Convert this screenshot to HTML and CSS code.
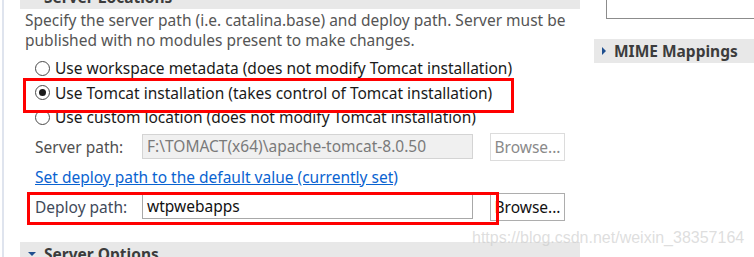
FILE: index.html
```html
<!DOCTYPE html>
<html lang="en">
<head>
<meta charset="UTF-8">
<title>Server Locations</title>
<link rel="stylesheet" href="styles.css">
</head>
<body>

<div class="page">
    <div class="left">
        <div class="section-head cut"><span class="arrow-down"></span>Server Locations</div>

        <div class="desc">Specify the server path (i.e. catalina.base) and deploy path. Server must be published with no modules present to make changes.</div>

        <div class="radios">
            <label class="radio"><span class="circle"></span>Use workspace metadata (does not modify Tomcat installation)</label>
            <label class="radio"><span class="circle checked"></span>Use Tomcat installation (takes control of Tomcat installation)</label>
            <label class="radio"><span class="circle"></span>Use custom location (does not modify Tomcat installation)</label>
        </div>

        <div class="row disabled">
            <span class="label">Server path:</span>
            <div class="field">F:\TOMACT(x64)\apache-tomcat-8.0.50</div>
            <div class="button">Browse...</div>
        </div>

        <a class="link" href="#">Set deploy path to the default value (currently set)</a>

        <div class="row deploy">
            <span class="label">Deploy path:</span>
            <div class="field">wtpwebapps</div>
            <div class="button">Browse...</div>
        </div>

        <div class="section-head bottom"><span class="arrow-down"></span>Server Options</div>
    </div>

    <div class="right">
        <div class="box"></div>
        <div class="section-head mime"><span class="arrow-right"></span>MIME Mappings</div>
    </div>
</div>

<!-- annotations drawn over the screenshot -->
<div class="mark mark1"></div>
<div class="mark mark2"></div>
<div class="watermark">https://blog.csdn.net/weixin_38357164</div>

</body>
</html>
```

FILE: styles.css
```css
body {
    margin: 0;
    font-family: "Noto Sans", "Open Sans", sans-serif;
    font-size: 15.5px;
    background-color: #fff;
    overflow: hidden;
    position: relative;
    width: 754px;
    height: 257px;
}
.page {
    display: flex;
    height: 257px;
}
.left {
    width: 560px;
    margin-left: 2px;
    border-left: 2px solid #dfe4ee;
    padding-left: 16px;
    display: flex;
    flex-direction: column;
}
.section-head {
    background-color: #e8e8e8;
    color: #3c3c3c;
    font-weight: bold;
    display: flex;
    align-items: center;
    gap: 8px;
    padding-left: 8px;
    line-height: 24px;
    height: 24px;
    flex-shrink: 0;
}
.section-head.cut {
    margin-top: -15px;
}
.arrow-down {
    width: 0;
    height: 0;
    border-left: 4px solid transparent;
    border-right: 4px solid transparent;
    border-top: 4px solid #1f4f8f;
}
.arrow-right {
    width: 0;
    height: 0;
    border-top: 4px solid transparent;
    border-bottom: 4px solid transparent;
    border-left: 4px solid #1f4f8f;
}
.desc {
    color: #555;
    line-height: 20px;
    padding-left: 5px;
    margin-top: 1px;
    width: 555px;
}
.radios {
    display: flex;
    flex-direction: column;
    margin-top: 6px;
    padding-left: 15px;
}
.radio {
    display: flex;
    align-items: center;
    height: 24.5px;
    color: #1a1a1a;
    white-space: nowrap;
}
.circle {
    width: 13px;
    height: 13px;
    border: 1px solid #4a4a4a;
    border-radius: 50%;
    margin-right: 5px;
    display: flex;
    align-items: center;
    justify-content: center;
    background-color: #fff;
    flex-shrink: 0;
}
.circle.checked::after {
    content: "";
    width: 7px;
    height: 7px;
    border-radius: 50%;
    background-color: #1a1a1a;
}
.row {
    display: flex;
    align-items: center;
    padding-left: 15px;
    height: 28px;
    margin-top: 3px;
}
.label {
    width: 107px;
    color: #505050;
}
.field {
    width: 325px;
    height: 23px;
    border: 1px solid #a8a8a8;
    padding-left: 4px;
    line-height: 23px;
    color: #111;
}
.button {
    margin-left: 17px;
    width: 73px;
    height: 26px;
    border: 1px solid #adadad;
    line-height: 26px;
    text-align: center;
    color: #111;
}
.disabled .field {
    background-color: #f0f0f0;
    border-color: #d4d4d4;
    color: #7a7a7a;
}
.disabled .button {
    border-color: #dcdcdc;
    color: #8a8a8a;
}
.link {
    color: #0a63d1;
    text-decoration: underline;
    padding-left: 15px;
    margin-top: 3px;
    line-height: 26px;
    align-self: flex-start;
}
.row.deploy {
    margin-top: 3px;
}
.deploy .label {
    color: #3f4a5a;
}
.section-head.bottom {
    margin-top: 21px;
}
.right {
    flex: 1;
    display: flex;
    flex-direction: column;
    padding-left: 14px;
}
.box {
    margin-left: 12px;
    height: 18px;
    border-left: 1px solid #8c8c8c;
    border-bottom: 1px solid #8c8c8c;
}
.section-head.mime {
    margin-top: 20px;
}
.mark {
    position: absolute;
    border: 3px solid #f00;
}
.mark1 {
    left: 23px;
    top: 78px;
    width: 485px;
    height: 29px;
}
.mark2 {
    left: 27px;
    top: 192px;
    width: 466px;
    height: 27px;
}
.watermark {
    position: absolute;
    left: 472px;
    top: 229px;
    font-family: "Liberation Sans", sans-serif;
    font-size: 16px;
    color: rgba(200, 200, 200, 0.6);
}
```
